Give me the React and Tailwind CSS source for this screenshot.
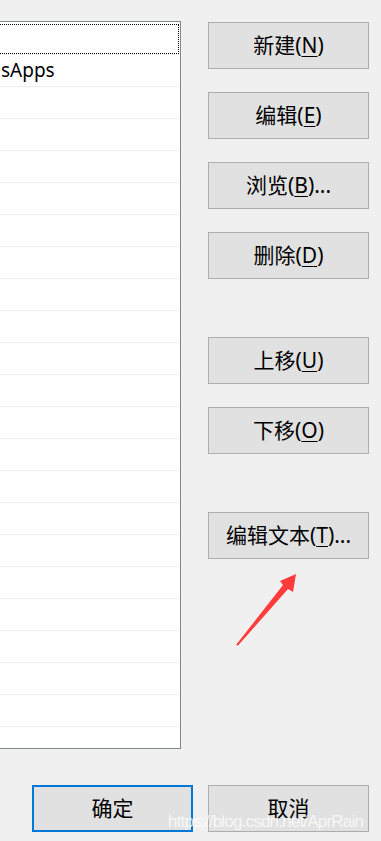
import React from "react";

const FONT = "font-['Noto_Sans','Noto_Sans_CJK_SC',sans-serif]";

function WinButton({ label, hotkey, suffix = "", def = false, className = "" }) {
    return (
        <button
            className={
                "w-[161px] h-[47px] shrink-0 bg-[#e1e1e1] text-black text-[21px] leading-none flex items-center justify-center " +
                (def ? "border-2 border-[#0078d7] " : "border border-[#adadad] ") +
                className
            }
        >
            <span>
                {label}(<span className="underline underline-offset-[3px] decoration-1">{hotkey}</span>){suffix}
            </span>
        </button>
    );
}

export default function App() {
    const rows = Array.from({ length: 21 });
    return (
        <div className={"relative w-[381px] h-[841px] overflow-hidden bg-[#f0f0f0] " + FONT}>
            <div className="flex pt-[21px]">
                <div className="-ml-[10px] w-[191px] h-[728px] shrink-0 overflow-hidden border border-[#828790] bg-white">
                    <div className="h-[33px] mr-[1px] pt-[2px] border-b border-[#f0f0f0]">
                        <div className="h-full border border-dotted border-black"></div>
                    </div>
                    {rows.map((_, i) => (
                        <div
                            key={i}
                            className="h-[32px] mr-[1px] border-b border-[#f0f0f0] pl-[10px] text-[19px] leading-[31px] text-black whitespace-nowrap"
                        >
                            {i === 0 ? "sApps" : ""}
                        </div>
                    ))}
                </div>
                <div className="ml-[27px] mt-[1px] flex flex-col">
                    <WinButton label="新建" hotkey="N" />
                    <WinButton label="编辑" hotkey="E" className="mt-[23px]" />
                    <WinButton label="浏览" hotkey="B" suffix="..." className="mt-[23px]" />
                    <WinButton label="删除" hotkey="D" className="mt-[23px]" />
                    <WinButton label="上移" hotkey="U" className="mt-[58px]" />
                    <WinButton label="下移" hotkey="O" className="mt-[23px]" />
                    <WinButton label="编辑文本" hotkey="T" suffix="..." className="mt-[58px]" />
                </div>
            </div>

            <div className="flex mt-[36px] pl-[32px] gap-[15px]">
                <button className="w-[161px] h-[47px] border-2 border-[#0078d7] bg-[#e1e1e1] text-black text-[21px] leading-none">
                    确定
                </button>
                <button className="w-[161px] h-[47px] border border-[#adadad] bg-[#e1e1e1] text-black text-[21px] leading-none">
                    取消
                </button>
            </div>

            {/* red annotation arrow */}
            <svg className="absolute left-[230px] top-[570px]" width="70" height="80" viewBox="0 0 70 80">
                <polygon
                    points="6,75 8,75.5 58,19 63,22 66,4 50,11 53,15"
                    fill="#ff3b3b"
                />
            </svg>

            {/* watermark */}
            <div className="absolute left-[168px] top-[813px] text-[17px] leading-[17px] tracking-[-0.8px] text-white/75 font-['Liberation_Sans',Arial,sans-serif] whitespace-nowrap">
                https://blog.csdn.net/AprRain
            </div>
        </div>
    );
}
